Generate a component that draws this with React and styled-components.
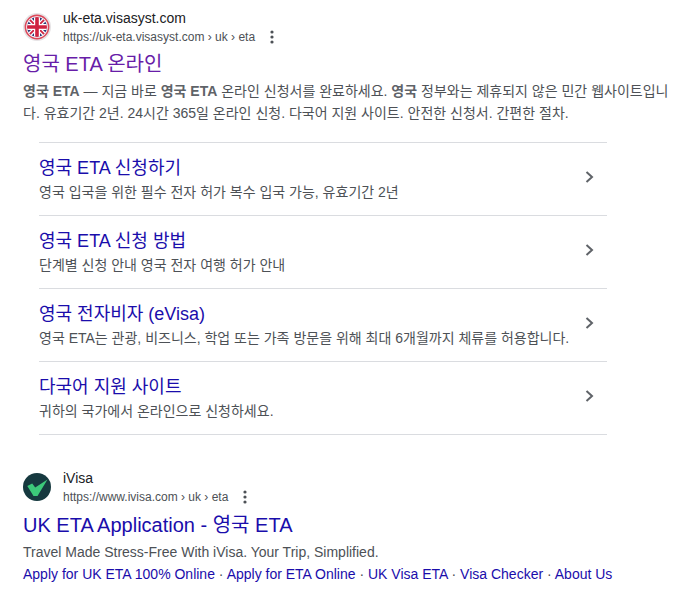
import React from "react";
import styled, { createGlobalStyle } from "styled-components";

const Global = createGlobalStyle`
  html, body { margin: 0; padding: 0; background: #fff; }
  body { font-family: "Liberation Sans", "Noto Sans CJK KR", sans-serif; }
`;
const Page = styled.div`
  width: 698px; height: 600px; overflow: hidden; box-sizing: border-box;
  padding: 9px 0 0 23px; display: flex; flex-direction: column; gap: 34px;
`;
const Result = styled.section`display: flex; flex-direction: column;`;
const Header = styled.div`display: flex; align-items: center; gap: 12px; height: 37px;`;
const Favicon = styled.svg`width: 28px; height: 28px; flex: none; margin-bottom: 1px;`;
const Source = styled.div`display: flex; flex-direction: column; gap: 1px;`;
const SiteName = styled.div`font-size: 14px; line-height: 18px; color: #202124;`;
const UrlRow = styled.div`display: flex; align-items: center; font-size: 12px; line-height: 18px; color: #4d5156;`;
const More = styled.svg`width: 18px; height: 18px; margin-left: 8px; fill: #4d5156;`;
const Title = styled.h3`
  margin: ${p => (p.$visited ? "5px" : "6px")} 0 0; font-weight: 400; font-size: 20px; line-height: 26px;
  color: ${p => (p.$visited ? "#681da8" : "#1a0dab")};
`;
const Desc = styled.p`
  margin: 3px 0 0; width: 650px; font-size: 14px; line-height: 22px; color: #4d5156;
  word-break: break-all; b { font-weight: 700; color: #5f6368; }
`;
const Sitelinks = styled.div`
  margin: 18px 0 0 16px; width: 568px; border-top: 1px solid #dadce0;
`;
const Row = styled.div`
  height: 72px; border-bottom: 1px solid #dadce0; display: flex; align-items: center;
  justify-content: space-between; padding-right: 11px;
`;
const RowText = styled.div`display: flex; flex-direction: column; gap: 2px;`;
const RowTitle = styled.div`font-size: 18px; line-height: 24px; color: #1a0dab;`;
const RowDesc = styled.div`font-size: 14px; line-height: 20px; color: #4d5156;`;
const Chevron = styled.svg`width: 14px; height: 14px; margin-bottom: 5px; fill: none; stroke: #5f6368; stroke-width: 2;`;
const Snippet = styled.p`margin: 3px 0 0; font-size: 14px; line-height: 22px; color: #4d5156;`;
const Links = styled.div`font-size: 14px; line-height: 22px; color: #4d5156;`;
const LinkText = styled.span`color: #1a0dab;`;

const Dots = () => (
  <More viewBox="0 0 18 18"><circle cx="9" cy="4" r="1.6" /><circle cx="9" cy="9" r="1.6" /><circle cx="9" cy="14" r="1.6" /></More>
);

const UkIcon = () => (
  <Favicon viewBox="0 0 28 28">
    <defs><clipPath id="c"><circle cx="14" cy="14" r="10" /></clipPath></defs>
    <circle cx="14" cy="14" r="14" fill="#e6e3e5" />
    <circle cx="14" cy="14" r="11.6" fill="#fff" stroke="#dc4a5c" strokeWidth="1.6" />
    <g clipPath="url(#c)">
      <rect x="3" y="3" width="22" height="22" fill="#2b3a78" />
      <path d="M3 3 25 25M25 3 3 25" stroke="#fff" strokeWidth="4.4" />
      <path d="M3 3 25 25M25 3 3 25" stroke="#cf2340" strokeWidth="1.8" />
      <path d="M14 3V25M3 14H25" stroke="#fff" strokeWidth="6" />
      <path d="M14 3V25M3 14H25" stroke="#cf2340" strokeWidth="3.6" />
    </g>
  </Favicon>
);
const IvisaIcon = () => (
  <Favicon viewBox="0 0 28 28">
    <circle cx="14" cy="14" r="14" fill="#16393f" />
    <path d="M4.3 13 L9.2 10.5 L12.2 14.6 L24.5 6.5 L14.5 23 L10.5 23 Z" fill="#3cc97a" />
  </Favicon>
);

const sitelinks = [
  ["영국 ETA 신청하기", "영국 입국을 위한 필수 전자 허가 복수 입국 가능, 유효기간 2년"],
  ["영국 ETA 신청 방법", "단계별 신청 안내 영국 전자 여행 허가 안내"],
  ["영국 전자비자 (eVisa)", "영국 ETA는 관광, 비즈니스, 학업 또는 가족 방문을 위해 최대 6개월까지 체류를 허용합니다."],
  ["다국어 지원 사이트", "귀하의 국가에서 온라인으로 신청하세요."],
];

export default function App() {
  return (
    <Page>
      <Global />
      <Result>
        <Header>
          <UkIcon />
          <Source>
            <SiteName>uk-eta.visasyst.com</SiteName>
            <UrlRow>https://uk-eta.visasyst.com › uk › eta<Dots /></UrlRow>
          </Source>
        </Header>
        <Title $visited>영국 ETA 온라인</Title>
        <Desc>
          <b>영국 ETA</b> — 지금 바로 <b>영국 ETA</b> 온라인 신청서를 완료하세요. <b>영국</b> 정부와는 제휴되지 않은 민간 웹사이트입니다. 유효기간 2년. 24시간 365일 온라인 신청. 다국어 지원 사이트. 안전한 신청서. 간편한 절차.
        </Desc>
        <Sitelinks>
          {sitelinks.map(([t, d]) => (
            <Row key={t}>
              <RowText>
                <RowTitle>{t}</RowTitle>
                <RowDesc>{d}</RowDesc>
              </RowText>
              <Chevron viewBox="0 0 14 14"><path d="M4.5 2 10 7 4.5 12" /></Chevron>
            </Row>
          ))}
        </Sitelinks>
      </Result>
      <Result>
        <Header>
          <IvisaIcon />
          <Source>
            <SiteName>iVisa</SiteName>
            <UrlRow>https://www.ivisa.com › uk › eta<Dots /></UrlRow>
          </Source>
        </Header>
        <Title>UK ETA Application - 영국 ETA</Title>
        <Snippet>Travel Made Stress-Free With iVisa. Your Trip, Simplified.</Snippet>
        <Links>
          <LinkText>Apply for UK ETA 100% Online</LinkText> · <LinkText>Apply for ETA Online</LinkText> · <LinkText>UK Visa ETA</LinkText> · <LinkText>Visa Checker</LinkText> · <LinkText>About Us</LinkText>
        </Links>
      </Result>
    </Page>
  );
}
